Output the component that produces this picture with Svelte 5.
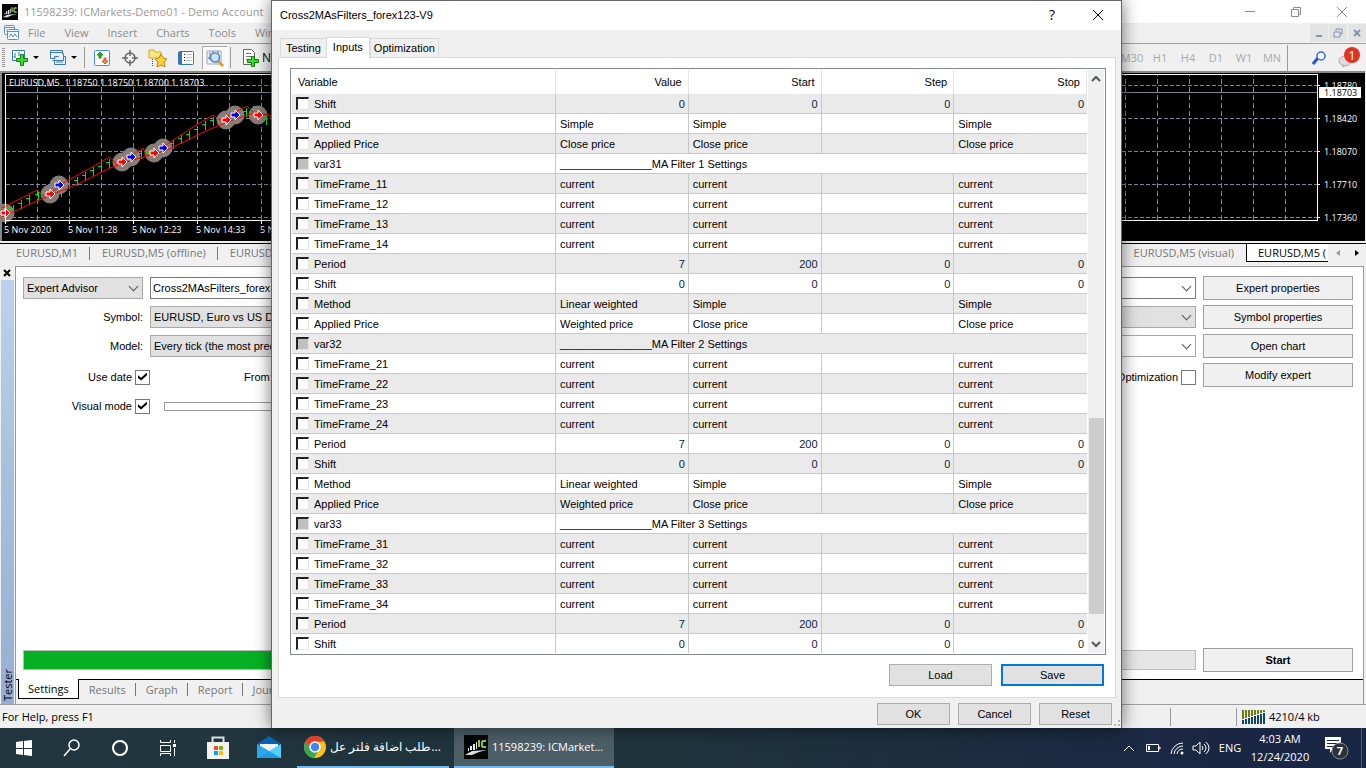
<script lang="ts">
  type Row = { name: string; cells?: string[]; header?: string };

  const tf = (n: number): Row[] =>
    [1, 2, 3, 4].map((i) => ({ name: `TimeFrame_${n}${i}`, cells: ["current", "current", "", "current"] }));
  const section = (n: number): Row => ({ name: `var3${n}`, header: `_______________MA Filter ${n} Settings` });
  const period: Row = { name: "Period", cells: ["7", "200", "0", "0"] };
  const shift: Row = { name: "Shift", cells: ["0", "0", "0", "0"] };
  const weighted: Row[] = [
    { name: "Method", cells: ["Linear weighted", "Simple", "", "Simple"] },
    { name: "Applied Price", cells: ["Weighted price", "Close price", "", "Close price"] },
  ];

  const rows: Row[] = [
    shift,
    { name: "Method", cells: ["Simple", "Simple", "", "Simple"] },
    { name: "Applied Price", cells: ["Close price", "Close price", "", "Close price"] },
    section(1), ...tf(1), period, shift, ...weighted,
    section(2), ...tf(2), period, shift, ...weighted,
    section(3), ...tf(3), period, shift,
  ];

  const menus = ["File", "View", "Insert", "Charts", "Tools", "Window", "Help"];
  const frames = ["M30", "H1", "H4", "D1", "W1", "MN"];
  const prices = [
    { y: 14, text: "1.18780" },
    { y: 47, text: "1.18420" },
    { y: 80, text: "1.18070" },
    { y: 113, text: "1.17710" },
    { y: 146, text: "1.17360" },
  ];
  const times = ["5 Nov 2020", "5 Nov 11:28", "5 Nov 12:23", "5 Nov 14:33", "5 Nov 15:41"];
  const trades = [
    [5, 142, "red"], [50, 123, "red"], [59, 114, "blue"], [122, 91, "red"], [131, 86, "blue"],
    [154, 82, "red"], [163, 77, "blue"], [226, 49, "red"], [235, 44, "blue"], [258, 44, "red"],
  ] as [number, number, string][];
  const ticks = [
    [13, 134], [21, 129], [29, 124], [38, 120], [61, 117], [69, 109], [77, 106], [85, 101], [93, 96], [101, 92],
    [109, 88], [141, 79], [149, 78], [173, 69], [181, 64], [189, 60], [197, 55], [205, 50], [213, 46], [246, 37], [253, 35], [266, 45],
  ];
  const bars = [1, 2, 3, 4, 5, 6, 7, 8];

  const isNumber = (s: string) => /^\d+$/.test(s);
</script>

{#snippet icLogo(size: number)}
  <svg width={size} height={size} viewBox="0 0 24 24">
    <rect width="24" height="24" fill="#050505" />
    <path d="M1 20 8 16 23 15 15 17 8 20Z" fill="#ddd" />
    <path d="M4 16v-3h1v3zM6 15v-4h2v4zM9 15V9h2v6zM12 14V7h1v7z" fill="#eee" />
    <path d="M15 5v7M22 6h-3l-1 1v4l1 1h3" fill="none" stroke="#8dc63f" stroke-width="2" />
  </svg>
{/snippet}

<div class="desktop">
  <div class="app">
    <header class="titlebar">
      {@render icLogo(16)}
      <span class="title">11598239: ICMarkets-Demo01 - Demo Account</span>
      <div class="winbtns">
        <button aria-label="Minimize"><svg width="12" height="12"><path d="M1 5.500h10" /></svg></button>
        <button aria-label="Restore"><svg width="12" height="12"><path d="M1.500 3.500h7v7h-7zM3.500 3.500v-2h7v7h-2" /></svg></button>
        <button aria-label="Close"><svg width="12" height="12"><path d="M1 1l10 10M11 1 1 11" /></svg></button>
      </div>
    </header>

    <nav class="menubar">
      <svg width="16" height="16" viewBox="0 0 16 16" fill="#f4f8ff" stroke="#5b8fd0">
        <rect x=".5" y=".5" width="10" height="9" rx="1" />
        <path d="M.5 2.500h10M3 4.500v2" />
        <rect x="3.500" y="4.500" width="11" height="10" rx="1" />
        <path d="M3.500 6.500h11M5 12l2-3 2 3 2-3 2 3" />
      </svg>
      {#each menus as item}
        <button>{item}</button>
      {/each}
      <div class="mdi">
        <button aria-label="Minimize chart"><svg width="10" height="10"><path d="M2 8h6" /></svg></button>
        <button aria-label="Restore chart"><svg width="10" height="10"><path d="M3 3V1h6v5H7M1 4h6v5H1z" /></svg></button>
        <button aria-label="Close chart"><svg width="10" height="10"><path d="M2 2l6 6M8 2 2 8" /></svg></button>
      </div>
    </nav>

    <div class="toolbar">
      <span class="grip"></span>
      <button class="wide" aria-label="New chart">
        <svg width="18" height="18" viewBox="0 0 18 18">
          <path d="M1.500 1.500h12v10h-12z" fill="#f3f8fd" stroke="#3d7ab5" />
          <path d="M4 4v5M2.500 8h2M8 3v4" stroke="#3d7ab5" />
          <path d="M9.500 5.500h3v4h4v3h-4v4h-3v-4h-4v-3h4z" fill="#34e02c" stroke="#12830f" />
        </svg>
        <i class="caret"></i>
      </button>
      <button class="wide" aria-label="Profiles">
        <svg width="18" height="18" viewBox="0 0 18 18" fill="#e8f1fb" stroke="#3d7ab5">
          <path d="M1.500 1.500h12v8h-12zM5.500 7.500h11v8h-11z" />
          <path d="M2 3.500h11M3.500 11.500h11v-7M7 13h7" />
        </svg>
        <i class="caret"></i>
      </button>
      <span class="sep"></span>
      <button aria-label="Market watch">
        <svg width="18" height="18" viewBox="0 0 18 18">
          <rect x="1.500" y="1.500" width="15" height="15" rx="1" fill="#fff" stroke="#4a8fd2" />
          <path d="M7 3l3 3H8v3H6V6H4z" fill="#27ae27" stroke="#1b8f1b" />
          <path d="M12 15 9 12h2V9h2v3h2z" fill="#f58a5a" stroke="#e0501e" />
        </svg>
      </button>
      <button aria-label="Crosshair">
        <svg width="18" height="18" viewBox="0 0 18 18" fill="none" stroke="#666">
          <circle cx="9" cy="9" r="5" stroke-width="1.500" /><path d="M9 1v6M9 11v6M1 9h6M11 9h6" stroke-width="1.500" />
        </svg>
      </button>
      <button aria-label="Navigator">
        <svg width="20" height="18" viewBox="0 0 20 18">
          <path d="M1 3V1h5l1 2h6v6H1z" fill="#ffe680" stroke="#d3a62a" />
          <path d="M4.500 10v7" stroke="#555" stroke-dasharray="1 1" />
          <path d="M13 5l2 4 4 1-3 3 1 5-4-2-4 2 1-5-3-3 4-1z" fill="#ffd23a" stroke="#b98516" />
        </svg>
      </button>
      <button aria-label="Terminal">
        <svg width="18" height="18" viewBox="0 0 18 18">
          <rect x="1.500" y="2.500" width="15" height="13" rx="1" fill="#fff" stroke="#3575b5" />
          <path d="M2 3h3v12H2z" fill="#3575b5" /><path d="M9 5.500h6M9 8.500h6M9 11.500h6" stroke="#b5c8dc" />
          <path d="M7.500 5v9" stroke="#222" stroke-dasharray="1 2" />
        </svg>
      </button>
      <button class="pressed" aria-label="Strategy tester">
        <svg width="18" height="18" viewBox="0 0 18 18">
          <path d="M1 2h14v13H1z" fill="#edf0f4" stroke="#9aa8b5" /><path d="M4 3v8M2 9h2M7 2v6M12 2v5" stroke="#667" />
          <path d="M12 12l5 5" stroke="#d6a12c" stroke-width="3" />
          <circle cx="9" cy="8.500" r="4.500" fill="#c9e2fa" stroke="#4a8bd0" stroke-width="1.500" />
        </svg>
      </button>
      <span class="sep"></span>
      <button class="order">
        <svg width="18" height="18" viewBox="0 0 18 18">
          <path d="M2.500.5h8l3 3v12h-11z" fill="#fff" stroke="#666" /><path d="M5 4.500h5M5 7.500h6M5 10.500h3" stroke="#777" />
          <path d="M10.500 7.500h3v3h4v3h-4v4h-3v-4h-4v-3h4z" fill="#34e02c" stroke="#12830f" />
        </svg>
        New Order
      </button>
      <div class="frames">
        {#each frames as frame}
          <button>{frame}</button>
        {/each}
      </div>
      <div class="tools">
        <button aria-label="Search">
          <svg width="14" height="14" viewBox="0 0 14 14"><path d="M1 13l5-6" stroke="#2458c0" stroke-width="3" /><circle cx="9" cy="5" r="4" fill="#fff" stroke="#2f6ad8" stroke-width="1.500" /></svg>
        </button>
        <button class="chat" aria-label="Messages">
          <svg width="22" height="22" viewBox="0 0 22 22">
            <ellipse cx="7" cy="14" rx="6" ry="5" fill="#ddd" stroke="#aaa" /><path d="M4 17v4l4-3z" fill="#bbb" />
            <circle cx="14" cy="8" r="8" fill="#e23420" />
            <text x="14" y="13" text-anchor="middle" fill="#fff" font-size="13">1</text>
          </svg>
        </button>
      </div>
    </div>

    <div class="chart">
      <svg class="plot" height="168">
        <defs>
          <pattern id="vgrid" x="6" y="0" width="32" height="8" patternUnits="userSpaceOnUse"><path d="M31.500 0v5" stroke="#778899" /></pattern>
          <pattern id="hgrid" x="0" y="14" width="6" height="33" patternUnits="userSpaceOnUse"><path d="M0 .5h4" stroke="#778899" /></pattern>
        </defs>
        <rect x="5" y="3" width="100%" height="146" fill="url(#vgrid)" />
        <rect x="5" y="3" width="100%" height="146" fill="url(#hgrid)" />
        <path class="price-line" d="M5 21.500h4000" />
        {#each trades as [x, y]}
          <circle cx={x} cy={y} r="9" fill="#8d7b6e" stroke="#77858f" />
        {/each}
        {#each ticks as [x, y]}
          <path d="M{x - 3} {y + 3}.5h3M{x}.5 {y}v9" stroke="#00e600" fill="none" />
        {/each}
        <path d="M2 137 37 119 45 127 60 114 110 86 117 94 143 77 147 85 163 76 190 58 213 44 220 49 247 35 253 41 300 50" stroke="#f00" fill="none" />
        <path d="M2 146 37 130 80 112 110 97 133 89 147 85 167 79 208 59 233 49 257 41 300 55" stroke="#f00" fill="none" />
        {#each trades as [x, y, color]}
          <path d="M{x - 4} {y - 2}h4v-3l5 5-5 5v-3h-4z" fill={color} stroke="#fff" />
        {/each}
        <path d="M5.500 149V3.500h4000M5 149.500h4000" stroke="#fff" fill="none" />
        {#each times as time, i}
          <path d="M{5.5 + i * 64} 149v4" stroke="#fff" />
          <text x={4 + i * 64} y="162">{time}</text>
        {/each}
        <text x="9" y="15">EURUSD,M5&nbsp; 1.18750 1.18750 1.18700 1.18703</text>
      </svg>
      <svg class="axis" width="48" height="168">
        <path d="M.5 3v147" stroke="#fff" />
        {#each prices as p}
          <path d="M0 {p.y + .5}h3" stroke="#fff" />
          <text x="7" y={p.y + 4}>{p.text}</text>
        {/each}
        <rect x="2" y="16" width="42" height="11" fill="#fff" />
        <text class="now" x="7" y="25">1.18703</text>
      </svg>
    </div>

    <div class="chart-tabs">
      <button>EURUSD,M1</button>
      <button>EURUSD,M5 (offline)</button>
      <button>EURUSD,M5</button>
      <button class="visual">EURUSD,M5 (visual)</button>
      <button class="current">EURUSD,M5 (</button>
      <button class="arrow" aria-label="Previous tab"></button>
      <button class="arrow next" aria-label="Next tab"></button>
    </div>

    <section class="tester">
      <div class="side">
        <button class="x" aria-label="Close tester"><svg width="8" height="8"><path d="M1 1l6 6M7 1 1 7" stroke="#000" stroke-width="2" /></svg></button>
        <div class="strip"><span>Tester</span></div>
      </div>
      <div class="tester-main">
        <div class="settings">
          <div class="form">
            <div class="combo"><select aria-label="Tester type"><option>Expert Advisor</option></select></div>
            <div class="combo edit"><select aria-label="Expert"><option>Cross2MAsFilters_forex123-V9</option></select></div>
            <button class="btn">Expert properties</button>

            <label class="lab" for="symbol">Symbol:</label>
            <div class="combo"><select id="symbol"><option>EURUSD, Euro vs US Dollar</option></select></div>
            <button class="btn">Symbol properties</button>

            <label class="lab" for="model">Model:</label>
            <div class="combo split"><select id="model"><option>Every tick (the most precise method based on all available least timeframes)</option></select></div>
            <button class="btn">Open chart</button>

            <div class="options">
              <label class="check">Use date <input type="checkbox" checked /></label>
              <span class="from">From:</span>
              <label class="check opt">Optimization <input type="checkbox" /></label>
            </div>
            <button class="btn">Modify expert</button>

            <div class="options">
              <label class="check">Visual mode <input type="checkbox" checked /></label>
              <div class="slider"></div>
            </div>
          </div>
          <div class="run">
            <div class="progress"><div style="width: 60%"></div></div>
            <button class="btn start">Start</button>
          </div>
        </div>
        <div class="bottom-tabs">
          <button class="current">Settings</button>
          <button>Results</button>
          <button>Graph</button>
          <button>Report</button>
          <button>Journal</button>
        </div>
      </div>
    </section>

    <footer class="status">
      <span>For Help, press F1</span>
      <div class="traffic">
        <svg width="24" height="14">
          {#each bars as n}
            <path d="M{n * 3 - 1} 0v{10 - n}" stroke="#6b7f10" stroke-width="2" />
            <path d="M{n * 3 - 1} {11 - n}v14" stroke="#0b4668" stroke-width="2" />
          {/each}
        </svg>
        4210/4 kb
      </div>
    </footer>
  </div>

  <div class="dialog" role="dialog" aria-label="Cross2MAsFilters_forex123-V9">
    <header>
      <span>Cross2MAsFilters_forex123-V9</span>
      <button class="help" aria-label="Help">?</button>
      <button aria-label="Close"><svg width="12" height="12"><path d="M1 1l10 10M11 1 1 11" stroke="#000" /></svg></button>
    </header>
    <div class="tabs">
      <button>Testing</button>
      <button class="current">Inputs</button>
      <button>Optimization</button>
    </div>
    <div class="pane">
      <div class="list">
        <table>
          <colgroup><col class="c-var" /><col /><col /><col /><col /></colgroup>
          <thead>
            <tr><th>Variable</th><th>Value</th><th>Start</th><th>Step</th><th>Stop</th></tr>
          </thead>
          <tbody>
            {#each rows as row, i}
              <tr>
                <td><label><input type="checkbox" disabled={!!row.header} id="row{i}" />{row.name}</label></td>
                {#if row.header}
                  <td colspan="4">{row.header}</td>
                {:else}
                  {#each row.cells ?? [] as cell}
                    <td class:num={isNumber(cell)}>{cell}</td>
                  {/each}
                {/if}
              </tr>
            {/each}
          </tbody>
        </table>
        <div class="scroll">
          <svg width="10" height="8"><path d="M1 6l4-4 4 4" /></svg>
          <div class="track"><div class="thumb"></div></div>
          <svg width="10" height="8"><path d="M1 2l4 4 4-4" /></svg>
        </div>
      </div>
      <div class="actions">
        <button class="btn">Load</button>
        <button class="btn focus">Save</button>
      </div>
    </div>
    <div class="buttons">
      <button class="btn">OK</button>
      <button class="btn">Cancel</button>
      <button class="btn">Reset</button>
    </div>
    <svg class="resize" width="8" height="8" fill="#b5b5b5"><path d="M5 0h2v2H5zM5 4h2v2H5zM1 4h2v2H1z" /></svg>
  </div>

  <div class="taskbar">
    <button aria-label="Start menu"><svg width="16" height="16" fill="#fff"><path d="M0 2l7-1v7H0zM8 1l8-1v8H8zM0 9h7v6l-7-1zM8 9h8v7l-8-1z" /></svg></button>
    <button aria-label="Search"><svg width="18" height="18" fill="none" stroke="#fff" stroke-width="1.500"><circle cx="11" cy="6" r="5" /><path d="M7 10l-6 7" /></svg></button>
    <button aria-label="Cortana"><svg width="18" height="18" fill="none" stroke="#fff" stroke-width="2"><circle cx="9" cy="9" r="7" /></svg></button>
    <button aria-label="Task view">
      <svg width="18" height="16" fill="none" stroke="#fff"><path d="M1.500 0v2.500h10V0M1.500 5.500h10v6h-10zM1.500 16v-2.500h10V16M15.500 0v3M15.500 8v8" /><path d="M14 4h3v3h-3z" fill="#fff" stroke="none" /></svg>
    </button>
    <button class="pin" aria-label="Store">
      <svg width="24" height="24">
        <path d="M6.500 6V1.500h11V6" fill="none" stroke="#ddd" stroke-width="2" /><path d="M1 6h22v17H1z" fill="#f2f2f2" />
        <path d="M8 10h4v4H8z" fill="#f25022" /><path d="M13 10h4v4h-4z" fill="#7fba00" />
        <path d="M8 15h4v4H8z" fill="#00a4ef" /><path d="M13 15h4v4h-4z" fill="#ffb900" />
      </svg>
    </button>
    <button class="pin" aria-label="Mail">
      <svg width="24" height="24">
        <path d="M0 8l12-8 12 8v3H0z" fill="#0a63b5" /><path d="M3 8h18v8H3z" fill="#f2f2f2" />
        <path d="M0 8l24 14H0z" fill="#28a8ea" /><path d="M24 8 0 22h24z" fill="#50d0fa" /><path d="M0 22l12-7 12 7z" fill="#1f9be8" />
      </svg>
    </button>
    <button class="task browser">
      <svg width="22" height="22" viewBox="0 0 22 22">
        <circle cx="11" cy="11" r="11" fill="#fbc116" />
        <path d="M1.500 5.500A11 11 0 0 1 20.500 5.500L11 6 7 14z" fill="#ea4335" />
        <path d="M1.500 5.500A11 11 0 0 0 10 22l5-8-8 0z" fill="#34a853" />
        <circle cx="11" cy="11" r="5" fill="#4285f4" stroke="#fff" stroke-width="1.500" />
      </svg>
      <bdo dir="ltr"><bdi dir="rtl">طلب اضافة فلتر عل</bdi>...</bdo>
    </button>
    <button class="task active">
      {@render icLogo(24)}
      <span>11598239: ICMarket...</span>
    </button>

    <div class="tray">
      <button aria-label="Hidden icons"><svg width="12" height="8"><path d="M1 7l5-5 5 5" /></svg></button>
      <button aria-label="Battery"><svg width="16" height="10"><path d="M1.500 1.500h12v7h-12zM14 4h1v2h-1" /><path d="M3 3h2v4H3z" fill="#fff" stroke="none" /></svg></button>
      <button aria-label="Network"><svg width="14" height="14"><path d="M1 13A12 12 0 0 1 13 2M4 13a9 9 0 0 1 9-8M7 13a6 6 0 0 1 6-5" /><circle cx="12" cy="12" r="1.500" fill="#fff" stroke="none" /></svg></button>
      <button aria-label="Volume"><svg width="18" height="14"><path d="M1 5h3l4-4v12L4 9H1zM10 5q2 2 0 4M12 3q4 4 0 8M14 1q6 6 0 12" /></svg></button>
      <button class="lang">ENG</button>
      <div class="clock"><span>4:03 AM</span><span>12/24/2020</span></div>
      <button class="note" aria-label="Notifications">
        <svg width="26" height="26">
          <path d="M1 2h16v12h-8l-3 4v-4H1z" fill="#fff" /><path d="M3 5.500h12M3 8.500h12M3 11.500h8" stroke="#1b2942" />
          <circle cx="16" cy="16" r="8" fill="#2c3238" stroke="#878c90" />
          <text x="16" y="20" text-anchor="middle" fill="#fff" font-size="11" font-weight="bold">7</text>
        </svg>
      </button>
    </div>
  </div>
</div>

<style>
  :global(body) {
    margin: 0;
  }

  .desktop {
    --ui: "Open Sans", "Noto Sans", sans-serif;
    --form: "Liberation Sans", Arial, sans-serif;
    position: relative;
    display: flex;
    flex-direction: column;
    height: 100vh;
    min-height: 768px;
    overflow: hidden;
    background: #f0f0f0;
    color: #000;
    font: 11px/16px var(--ui);
  }

  .desktop * {
    box-sizing: border-box;
  }

  button,
  select,
  input {
    margin: 0;
    padding: 0;
    border: 0;
    background: none;
    color: inherit;
    font: inherit;
    white-space: nowrap;
  }

  svg {
    display: block;
    flex: none;
  }

  .app {
    flex: 1;
    display: flex;
    flex-direction: column;
    min-height: 0;
  }

  .titlebar {
    display: flex;
    align-items: center;
    gap: 6px;
    height: 23px;
    padding-left: 2px;
    background: #fff;
    color: #999;
  }

  .winbtns {
    display: flex;
    margin: 0 1px 0 auto;
  }

  .winbtns button {
    display: flex;
    justify-content: center;
    width: 46px;
  }

  .winbtns svg {
    fill: none;
    stroke: #888;
  }

  .menubar {
    display: flex;
    align-items: center;
    height: 21px;
    padding-left: 4px;
    border-bottom: 1px solid #a0a0a0;
    color: #8c8c8c;
  }

  .menubar > button {
    padding-left: 8px;
    margin-right: 11px;
  }

  .mdi {
    display: flex;
    gap: 1px;
    margin-left: auto;
  }

  .mdi button {
    display: flex;
    align-items: center;
    justify-content: center;
    width: 18px;
    height: 18px;
    background: #e3e3e3;
  }

  .mdi svg {
    fill: none;
    stroke: #8196aa;
    stroke-width: 2;
  }

  .mdi button:nth-child(2) svg {
    stroke-width: 1;
  }

  .toolbar {
    display: flex;
    align-items: center;
    height: 27px;
    padding-left: 2px;
  }

  .toolbar button {
    display: flex;
    align-items: center;
    justify-content: center;
    flex: none;
    width: 28px;
  }

  .toolbar .wide {
    width: 38px;
    gap: 4px;
  }

  .grip {
    width: 3px;
    height: 19px;
    background: repeating-linear-gradient(#999 0 1px, #f0f0f0 1px 2px);
    margin-right: 1px;
  }

  .caret {
    border: 3px solid transparent;
    border-top-color: #000;
    border-bottom: 0;
  }

  .sep {
    width: 1px;
    height: 21px;
    margin: 0 3px 0 2px;
    background: #999;
  }

  .toolbar .pressed {
    width: 26px;
    height: 24px;
    margin-left: 2px;
    border: 1px solid #aaa;
    border-right-color: #fff;
    border-bottom-color: #fff;
    background: #f8f8f8;
  }

  .toolbar .order {
    width: auto;
    gap: 3px;
    padding-left: 7px;
    font-size: 12px;
  }

  .frames {
    display: flex;
    margin-left: auto;
    height: 26px;
    padding-right: 1px;
    border-right: 1px solid #999;
    color: #aaa;
  }

  .tools {
    display: flex;
    align-items: center;
    padding: 0 1px 0 17px;
  }

  .tools .chat {
    width: 32px;
  }

  .chart {
    display: flex;
    height: 170px;
    border-left: 2px solid #888;
    background: linear-gradient(#888 2px, #000 2px);
    margin-right: 1px;
  }

  .chart .plot {
    flex: 1;
    width: 0;
    margin-left: -2px;
  }

  .chart text {
    fill: #fff;
    font: 9px var(--ui);
  }

  .chart .now {
    fill: #000;
  }

  .price-line {
    stroke: #778899;
  }

  .chart-tabs {
    display: flex;
    height: 22px;
    margin-top: 2px;
    border-top: 1px solid #000;
    color: #777;
  }

  .chart-tabs button {
    display: flex;
    align-items: center;
    height: 18px;
    padding: 0 12px;
  }

  .chart-tabs button:nth-child(1) {
    padding-left: 16px;
  }

  .chart-tabs button:nth-child(-n + 2) {
    background: linear-gradient(#777, #777) right center / 1px 13px no-repeat;
  }

  .chart-tabs .visual {
    margin-left: auto;
  }

  .chart-tabs .current {
    width: 82px;
    padding: 0 0 0 11px;
    border: solid #000;
    border-width: 0 0 1px 1px;
    background: #fff;
    color: #000;
  }

  .chart-tabs .arrow {
    justify-content: center;
    width: 19px;
    padding: 0;
  }

  .arrow::before {
    content: "";
    border: 3px solid transparent;
    border-right: 4px solid #999;
    border-left: 0;
  }

  .arrow.next::before {
    border-left: 4px solid #000;
    border-right: 0;
  }

  .tester {
    flex: 1;
    display: flex;
    min-height: 0;
    font: 11px/14px var(--form);
  }

  .side {
    display: flex;
    flex-direction: column;
    width: 15px;
    padding-left: 1px;
  }

  .side .x {
    display: flex;
    align-items: center;
    height: 15px;
    padding-left: 2px;
  }

  .strip {
    flex: 1;
    display: flex;
    align-items: flex-end;
    width: 13px;
    background: linear-gradient(#bcd2ec, #a9c3de 40%, #94afd4);
    font: 11px/13px var(--ui);
  }

  .strip span {
    writing-mode: vertical-rl;
    transform: rotate(180deg);
    padding-top: 3px;
  }

  .tester-main {
    flex: 1;
    display: flex;
    flex-direction: column;
    min-width: 0;
    margin: 1px 2px 0 0;
    border: 1px solid #999;
    border-bottom: 0;
  }

  .settings {
    flex: 1;
    display: flex;
    flex-direction: column;
    justify-content: space-between;
    padding: 9px 10px 7px 7px;
    background: #fff;
    border-bottom: 1px solid #000;
  }

  .form {
    display: grid;
    grid-template-columns: 120px 1fr 150px;
    grid-auto-rows: 24px;
    gap: 5px 7px;
    align-items: center;
  }

  .btn {
    height: 24px;
    border: 1px solid #a0a0a0;
    background: #f0f0f0;
    text-align: center;
  }

  .combo {
    position: relative;
    min-width: 0;
  }

  .combo select {
    appearance: none;
    display: block;
    width: 100%;
    height: 22px;
    padding: 0 3px;
    border: 1px solid #a8a8a8;
    background: #e1e1e1;
    line-height: 20px;
  }

  .combo.edit select {
    padding: 0 2px;
    border-color: #777;
    background: #fff;
  }

  .combo.split select {
    background: linear-gradient(90deg, #e1e1e1 60%, #fff 60%);
  }

  .combo::after {
    content: "";
    position: absolute;
    right: 6px;
    top: 6px;
    width: 6px;
    height: 6px;
    border: solid #555;
    border-width: 0 1px 1px 0;
    transform: rotate(45deg);
    pointer-events: none;
  }

  .lab {
    text-align: right;
  }

  .options {
    grid-column: 1 / 3;
    display: flex;
    align-items: center;
    height: 28px;
    padding-top: 4px;
  }

  .check {
    display: flex;
    align-items: center;
    justify-content: flex-end;
    gap: 3px;
    width: 127px;
  }

  .check input {
    appearance: none;
    width: 15px;
    height: 15px;
    border: 1px solid #777;
    background: #fff;
  }

  .check input:checked::after {
    content: "";
    display: block;
    width: 9px;
    height: 8px;
    margin: 2px;
    background: #000;
    clip-path: polygon(0 35%, 35% 65%, 100% 0, 100% 35%, 35% 100%, 0 70%);
  }

  .check.opt {
    margin-left: auto;
  }

  .from {
    margin-left: 94px;
  }

  .slider {
    width: 60%;
    height: 9px;
    margin-left: 14px;
    border: 1px solid #999;
  }

  .run {
    display: grid;
    grid-template-columns: 1fr 150px;
    gap: 7px;
    align-items: center;
  }

  .progress {
    height: 20px;
    border: 1px solid #bcbcbc;
    background: #e6e6e6;
  }

  .progress div {
    height: 100%;
    background: #06b025;
  }

  .start {
    font-weight: bold;
  }

  .bottom-tabs {
    display: flex;
    height: 24px;
    padding-left: 2px;
    color: #777;
    font: 11px/16px var(--ui);
  }

  .bottom-tabs button {
    height: 19px;
    padding: 0 10px;
    background: linear-gradient(#777, #777) right center / 1px 13px no-repeat;
  }

  .bottom-tabs .current {
    margin-top: -1px;
    height: 20px;
    padding: 0 9px;
    border: solid #000;
    border-width: 0 1px 1px;
    background: #fff;
    color: #000;
  }

  .status {
    display: flex;
    align-items: center;
    justify-content: space-between;
    height: 24px;
    padding-left: 2px;
    border-top: 1px solid #a0a0a0;
  }

  .traffic {
    display: flex;
    align-items: center;
    gap: 4px;
    width: 196px;
    height: 18px;
    padding-left: 70px;
    border-left: 1px solid #999;
    background: linear-gradient(#999, #999) 65px 0 / 1px 18px no-repeat;
    white-space: nowrap;
  }

  .dialog {
    position: absolute;
    top: 0;
    bottom: 40px;
    left: 271px;
    right: 244px;
    display: flex;
    flex-direction: column;
    border: 1px solid #666;
    border-bottom: 0;
    background: #f0f0f0;
    box-shadow: 0 0 16px rgba(0, 0, 0, .55);
    font: 11px/14px var(--form);
  }

  .dialog header {
    display: flex;
    align-items: center;
    height: 30px;
    padding-left: 8px;
    background: #fff;
  }

  .dialog header span {
    flex: 1;
  }

  .dialog header button {
    display: flex;
    justify-content: center;
    width: 46px;
  }

  .dialog .help {
    font: 14px/16px var(--ui);
  }

  .tabs {
    display: flex;
    align-items: flex-end;
    height: 28px;
    padding-left: 8px;
  }

  .tabs button {
    height: 19px;
    padding: 0 3px;
    border: 1px solid #d9d9d9;
    border-bottom: 0;
  }

  .tabs button:first-child {
    padding: 0 5px;
    border-right: 0;
  }

  .tabs .current {
    position: relative;
    height: 21px;
    margin-bottom: -1px;
    padding: 0 6px 3px;
    background: #fff;
  }

  .pane {
    flex: 1;
    display: flex;
    flex-direction: column;
    margin: 0 5px 0 6px;
    padding: 10px 9px 11px 11px;
    border: 1px solid #d9d9d9;
    background: #fff;
  }

  .list {
    flex: 1;
    display: flex;
    padding: 1px;
    border: 1px solid #828790;
  }

  table {
    flex: 1;
    width: 0;
    align-self: flex-start;
    table-layout: fixed;
    border-collapse: separate;
    border-spacing: 0;
  }

  .c-var {
    width: 264px;
  }

  th {
    height: 24px;
    padding: 0 6px;
    border-right: 1px solid #e5e5e5;
    font-weight: normal;
    text-align: right;
  }

  th:first-child {
    text-align: left;
  }

  td {
    height: 20px;
    padding: 0 4px;
    border-right: 1px solid #c8c8c8;
    border-bottom: 1px solid #c8c8c8;
    line-height: 14px;
    white-space: nowrap;
  }

  td:last-child {
    border-right: 0;
  }

  tr:last-child td {
    height: 19px;
    border-bottom: 0;
  }

  tbody tr:nth-child(odd) {
    background: #eaeaea;
  }

  td.num {
    padding-right: 3px;
    color: #0c1c40;
    text-align: right;
  }

  td label {
    display: flex;
    align-items: center;
    gap: 5px;
  }

  td input {
    appearance: none;
    width: 13px;
    height: 13px;
    border: solid;
    border-width: 2px 1px 1px 2px;
    border-color: #222 #e3e3e3 #e3e3e3 #222;
    background: #fff;
  }

  td input:disabled {
    background: #c0c0c0;
  }

  .scroll {
    display: flex;
    flex-direction: column;
    align-items: center;
    justify-content: space-between;
    width: 17px;
    padding: 5px 1px;
    border-left: 1px solid #fff;
    background: #f0f0f0;
  }

  .scroll svg {
    fill: none;
    stroke: #555;
    stroke-width: 2;
  }

  .track {
    flex: 1;
    display: flex;
    flex-direction: column;
    justify-content: flex-end;
    width: 15px;
    padding-bottom: 26px;
  }

  .thumb {
    height: 37%;
    background: #cdcdcd;
  }

  .actions,
  .buttons {
    display: flex;
    justify-content: flex-end;
    gap: 9px;
    padding: 9px 2px 0 0;
  }

  .dialog .btn {
    width: 103px;
    height: 22px;
    border-color: #adadad;
    background: #e1e1e1;
  }

  .dialog .btn.focus {
    border: 2px solid #0078d7;
  }

  .buttons {
    gap: 8px;
    padding: 5px 9px;
    height: 30px;
  }

  .dialog .buttons .btn {
    width: 73px;
  }

  .resize {
    position: absolute;
    right: 0;
    bottom: 0;
  }

  .taskbar {
    display: flex;
    align-items: center;
    height: 40px;
    background: linear-gradient(90deg, #21363d, #1f333d 50%, #1a2744 90%);
    color: #fff;
  }

  .taskbar button {
    display: flex;
    align-items: center;
    justify-content: center;
    flex: none;
    width: 48px;
    height: 40px;
  }

  .taskbar .pin {
    width: 51px;
  }

  .taskbar .task {
    justify-content: flex-start;
    gap: 4px;
    width: 152px;
    margin-right: 5px;
    padding: 0 7px;
    border-bottom: 2px solid #76b9ed;
  }

  .taskbar .browser {
    margin-left: 3px;
    font-size: 12px;
  }

  .taskbar .active {
    width: 160px;
    padding: 0 10px;
    background: #4c5e66;
  }

  .tray {
    display: flex;
    align-items: center;
    height: 40px;
    margin: 0 4px 0 auto;
    border-right: 1px solid #566075;
  }

  .tray svg {
    fill: none;
    stroke: #fff;
  }

  .tray .note svg {
    stroke: none;
  }

  .tray button {
    width: 24px;
  }

  .tray .lang {
    width: 34px;
  }

  .clock {
    display: flex;
    flex-direction: column;
    align-items: center;
    width: 66px;
    line-height: 18px;
  }

  .tray .note {
    width: 48px;
  }
</style>
